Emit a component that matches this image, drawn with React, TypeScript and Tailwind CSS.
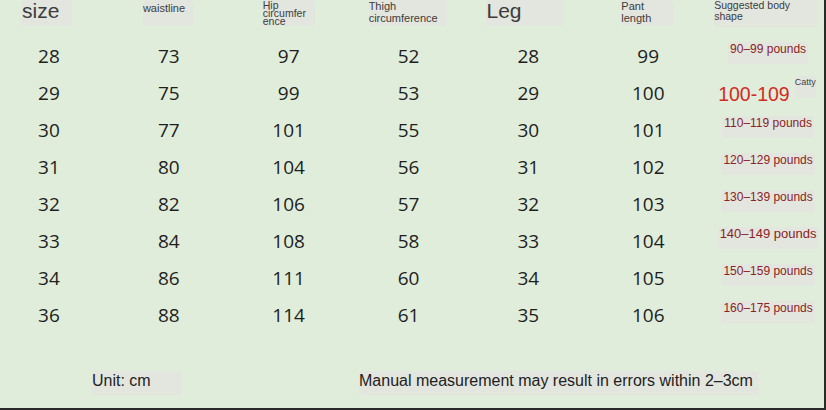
import React from 'react';

const rows = [
  ['28', '73', '97', '52', '28', '99'],
  ['29', '75', '99', '53', '29', '100'],
  ['30', '77', '101', '55', '30', '101'],
  ['31', '80', '104', '56', '31', '102'],
  ['32', '82', '106', '57', '32', '103'],
  ['33', '84', '108', '58', '33', '104'],
  ['34', '86', '111', '60', '34', '105'],
  ['36', '88', '114', '61', '35', '106'],
];

const shapes = [
  '90–99 pounds',
  null,
  '110–119 pounds',
  '120–129 pounds',
  '130–139 pounds',
  '140–149 pounds',
  '150–159 pounds',
  '160–175 pounds',
];

// faint grey patch behind labels, like in the source image
const patch = 'bg-[#e2e6df] rounded-sm';

export default function App() {
  return (
    <div className="w-[826px] h-[410px] bg-[#e0eddb] border-r-2 border-b-2 border-[#2a2a2a] overflow-hidden flex flex-col font-['Liberation_Sans',sans-serif]">
      {/* header */}
      <div className="flex h-[38px] ml-[-11px] text-[#3c3c3c]">
        <div className="w-[120px] pl-[33px]">
          <div className={`${patch} w-[50px] h-[26px] text-[21px] leading-[22px]`}>size</div>
        </div>
        <div className="w-[120px] pl-[34px]">
          <div className={`${patch} w-[50px] h-[26px] pt-[2px] text-[11px] leading-[12px]`}>waistline</div>
        </div>
        <div className="w-[120px] pl-[34px]">
          <div className={`${patch} w-[52px] h-[26px] pt-[1px] text-[10.5px] leading-[8px]`}>
            Hip<br />circumfer<br />ence
          </div>
        </div>
        <div className="w-[120px] pl-[20px]">
          <div className={`${patch} w-[78px] h-[26px] text-[11px] leading-[12px]`}>
            Thigh<br />circumference
          </div>
        </div>
        <div className="w-[120px] pl-[18px]">
          <div className={`${patch} w-[78px] h-[26px] text-[21px] leading-[22px]`}>Leg</div>
        </div>
        <div className="w-[120px] pl-[33px]">
          <div className={`${patch} w-[52px] h-[26px] text-[11px] leading-[12px]`}>
            Pant<br />length
          </div>
        </div>
        <div className="w-[116px] pl-[6px]">
          <div className={`${patch} w-[104px] h-[27px] text-[10.5px] leading-[11px]`}>
            Suggested body<br />shape
          </div>
        </div>
      </div>

      {/* table */}
      <div className="flex ml-[-11px]">
        {[0, 1, 2, 3, 4, 5].map((c) => (
          <div key={c} className="w-[120px] flex flex-col">
            {rows.map((r, i) => (
              <div
                key={i}
                className="h-[37px] flex items-center justify-center text-[19px] text-[#1e1e1e] font-['Open_Sans',sans-serif]"
              >
                {r[c]}
              </div>
            ))}
          </div>
        ))}
        <div className="w-[116px] flex flex-col">
          {shapes.map((s, i) =>
            s ? (
              <div key={i} className="h-[37px] flex justify-center pl-[4px] pt-[4px]">
                <span
                  className={`text-[#8a2323] ${i === 5 ? 'text-[13px]' : 'text-[12px]'} leading-[14px] ${patch} h-[22px] px-[2px]`}
                >
                  {s}
                </span>
              </div>
            ) : (
              <div key={i} className="h-[37px] flex items-center pl-[10px]">
                <span className="text-[#d42a22] text-[19.5px] leading-[22px]">100-109</span>
                <span className={`ml-[5px] -mt-[13px] text-[9px] text-[#444] ${patch} h-[22px]`}>Catty</span>
              </div>
            )
          )}
        </div>
      </div>

      {/* footer */}
      <div className="flex mt-[37px] text-[16px] text-[#222] leading-[20px]">
        <div className={`ml-[92px] ${patch} w-[90px] h-[24px]`}>Unit: cm</div>
        <div className={`ml-[177px] ${patch} pr-[6px] h-[24px]`}>
          Manual measurement may result in errors within 2–3cm
        </div>
      </div>
    </div>
  );
}
